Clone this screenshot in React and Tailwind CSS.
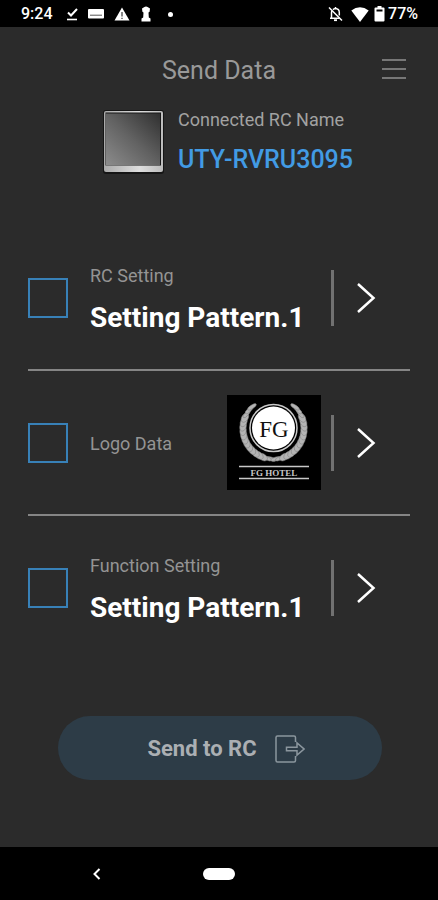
import React from "react";

function StatusBar() {
  return (
    <div className="flex h-[27px] items-center justify-between bg-black pt-px pr-5 pl-[21px] text-white">
      <div className="flex items-center">
        <span className="w-[45px] text-base leading-5 font-medium">9:24</span>
        <svg className="w-3" viewBox="0 0 12 14" fill="none" stroke="currentColor" strokeWidth="2" aria-hidden="true">
          <path d="M2 5.5 5 8.5 11 2" />
          <path d="M1 12.5H11" strokeWidth="1.6" />
        </svg>
        <svg className="ml-[10px] w-4" viewBox="0 0 16 10" aria-hidden="true">
          <rect width="16" height="9.5" rx="1" fill="currentColor" />
          <path d="M2 6.2H14" stroke="#555" strokeWidth="1" />
        </svg>
        <svg className="ml-[10px] w-4" viewBox="0 0 16 14" aria-hidden="true">
          <path d="M8 0.5 15.5 13.5H0.5Z" fill="currentColor" />
          <path d="M8 5V9.5M8 10.7V12" stroke="#555" strokeWidth="1.4" />
        </svg>
        <svg className="ml-[11px] w-[10px]" viewBox="0 0 10 16" fill="currentColor" aria-hidden="true">
          <path d="M3 1.2Q5-.4 7 1.2L9 2.5 8.6 5.8 7.5 6.5 7.8 11.5 9.5 12.5V15.5H.5V12.5L2.2 11.5 2.5 6.5 1.4 5.8 1 2.5Z" />
        </svg>
        <span className="ml-[17px] h-[5px] w-[5px] rounded-full bg-white" />
      </div>
      <div className="flex items-center">
        <svg className="w-[15px]" viewBox="0 0 15 16" fill="none" stroke="currentColor" strokeWidth="1.5" aria-hidden="true">
          <path d="M1 1.5 14 14.5" />
          <path d="M3.5 12V6.5L3.8 5M2 12.2H11.5M5 3.6C5.6 3 6.3 2.7 7.5 2.6 10 2.8 11.3 4.5 11.3 6.5V9.5M7.5 1V2.6" />
          <path d="M6 14.2H9" strokeWidth="1.8" />
        </svg>
        <svg className="ml-2 w-[18px]" viewBox="0 0 18 15" fill="currentColor" aria-hidden="true">
          <path d="M9 15 .3 3.6Q9-3 17.7 3.6Z" />
        </svg>
        <svg className="ml-[5px] w-[11px]" viewBox="0 0 11 16" aria-hidden="true">
          <path d="M3.5 0H7.5V1.5H9.5Q10.5 1.5 10.5 2.5V14.5Q10.5 15.5 9.5 15.5H1.5Q.5 15.5 .5 14.5V2.5Q.5 1.5 1.5 1.5H3.5Z" fill="currentColor" />
          <path d="M2.5 4.5H8.5" stroke="#000" strokeWidth="2" />
        </svg>
        <span className="ml-[3px] text-base leading-5 font-medium">77%</span>
      </div>
    </div>
  );
}

function Header() {
  return (
    <header className="grid h-[81px] grid-cols-[1fr_auto_1fr] items-center px-8 pt-[3px]">
      <h1 className="col-start-2 pt-1 text-[25px] leading-8 font-normal text-[#999]">Send Data</h1>
      <button type="button" aria-label="Menu" className="flex w-6 flex-col gap-[7px] justify-self-end">
        <span className="h-[2px] bg-[#777]" />
        <span className="h-[2px] bg-[#777]" />
        <span className="h-[2px] bg-[#777]" />
      </button>
    </header>
  );
}

function Device() {
  return (
    <svg className="h-16 w-[61px]" viewBox="0 0 61 64" aria-hidden="true">
      <defs>
        <linearGradient id="screen" x1="0" y1="1" x2="1" y2="0">
          <stop offset="0" stopColor="#8c8c8c" />
          <stop offset="0.5" stopColor="#626262" />
          <stop offset="1" stopColor="#303030" />
        </linearGradient>
        <linearGradient id="base" x1="0" y1="0" x2="1" y2="0">
          <stop offset="0" stopColor="#aaa" />
          <stop offset="0.6" stopColor="#dedede" />
          <stop offset="1" stopColor="#bbb" />
        </linearGradient>
      </defs>
      <rect width="61" height="64" rx="3" fill="#151515" />
      <rect x="1" y="1" width="59" height="61" rx="2" fill="url(#base)" />
      <rect x="2.5" y="2.5" width="55.5" height="53" fill="#171717" />
      <rect x="3" y="3.5" width="54" height="52" fill="url(#screen)" />
    </svg>
  );
}

function laurelLeaves(side) {
  const leaves = [];
  for (let i = 0; i < 17; i += 1) {
    const deg = 94 + i * 8.2;
    const a = (deg * Math.PI) / 180;
    const x = 46.5 + side * 30.5 * Math.cos(a);
    const y = 33.5 + 30.5 * Math.sin(a);
    const tilt = side === 1 ? deg + 90 : 90 - deg;
    leaves.push(
      <ellipse
        key={deg}
        cx={x}
        cy={y}
        rx="5"
        ry={i > 13 || i < 2 ? 1.8 : 3.2}
        transform={`rotate(${tilt + side * 12} ${x} ${y})`}
      />
    );
  }
  return leaves;
}

function HotelLogo() {
  return (
    <svg className="h-[95px] w-[94px] shrink-0" viewBox="0 0 94 95" role="img" aria-label="FG Hotel logo">
      <rect width="94" height="95" fill="#000" />
      <g fill="#b4b4b4" stroke="#7c7c7c" strokeWidth="0.5">
        {laurelLeaves(1)}
        {laurelLeaves(-1)}
      </g>
      <circle cx="46.5" cy="33" r="25.5" fill="#000" />
      <circle cx="46.5" cy="33" r="23.5" fill="none" stroke="#c9c9c9" strokeWidth="1.5" />
      <circle cx="46.5" cy="33" r="21.5" fill="#fff" />
      <text x="47" y="42" textAnchor="middle" fontSize="23" fill="#111" className="font-['Liberation_Serif',serif]">FG</text>
      <path d="M12 71.5H82M12 83.5H82" stroke="#c8c8c8" strokeWidth="1.6" />
      <text x="47" y="81" textAnchor="middle" fontSize="9" fontWeight="700" fill="#c8c8c8" className="font-['Liberation_Serif',serif]">FG HOTEL</text>
    </svg>
  );
}

function SettingRow({ id, label, value, children }) {
  return (
    <li className="flex h-[145px] items-center border-b-2 border-[#858585] last:h-[143px] last:border-b-0">
      <input
        id={id}
        type="checkbox"
        className="h-10 w-10 shrink-0 appearance-none border-2 border-[#3881b8] checked:bg-[#3881b8]"
      />
      <label htmlFor={id} className="ml-[22px] flex flex-1 flex-col gap-[14px] pt-[2px] whitespace-nowrap">
        <span className="text-lg leading-6 text-[#949494]">{label}</span>
        {value && <span className="text-[28px] leading-8 font-bold text-white">{value}</span>}
      </label>
      {children}
      <button
        type="button"
        aria-label={`Open ${label}`}
        className="ml-[10px] flex h-14 w-[79px] shrink-0 items-center border-l-[3px] border-[#717171] pl-[22px] text-white"
      >
        <svg className="h-8 w-5" viewBox="0 0 20 32" fill="none" stroke="currentColor" strokeWidth="2.5" aria-hidden="true">
          <path d="M2 2 17.5 16 2 30" />
        </svg>
      </button>
    </li>
  );
}

function SendButton() {
  return (
    <button
      type="button"
      className="mt-[57px] mr-7 ml-[30px] flex h-16 items-center justify-center gap-[18px] rounded-full bg-[#2d3c47] pt-px pl-3 text-[#abafb3]"
    >
      <span className="text-[22px] leading-7 font-bold">Send to RC</span>
      <svg className="h-7 w-[30px]" viewBox="0 0 30 28" fill="none" stroke="#8b969e" strokeWidth="1.5" aria-hidden="true">
        <path d="M20.5 7V2.5Q20.5 1 19 1H2.5Q1 1 1 2.5V25.5Q1 27 2.5 27H19Q20.5 27 20.5 25.5V21" />
        <path d="M11.5 12.2H22V8L29 14 22 20V15.8H11.5Z" />
      </svg>
    </button>
  );
}

function NavigationBar() {
  return (
    <nav className="grid h-[53px] grid-cols-[1fr_auto_1fr] items-center bg-black text-white">
      <div className="flex justify-center pr-[10px]">
        <button type="button" aria-label="Back">
          <svg className="h-3 w-2" viewBox="0 0 8 12" fill="none" stroke="currentColor" strokeWidth="2" aria-hidden="true">
            <path d="M6.5 1 1.5 6 6.5 11" />
          </svg>
        </button>
      </div>
      <button type="button" aria-label="Home" className="h-3 w-8 rounded-full bg-white" />
    </nav>
  );
}

export default function App() {
  return (
    <div className="flex min-h-screen flex-col bg-[#2b2b2b] font-[Roboto,sans-serif]">
      <StatusBar />
      <Header />
      <main className="flex flex-1 flex-col px-7">
        <section className="flex items-center justify-center gap-[14px] pl-[18px]">
          <Device />
          <div className="flex flex-col gap-[14px] pb-[2px] whitespace-nowrap">
            <p className="text-lg leading-6 text-[#a2a2a2]">Connected RC Name</p>
            <p className="text-[25px] leading-7 font-medium text-[#429be4]">UTY-RVRU3095</p>
          </div>
        </section>
        <ul className="mt-[50px]">
          <SettingRow id="rc-setting" label="RC Setting" value="Setting Pattern.1" />
          <SettingRow id="logo-data" label="Logo Data">
            <HotelLogo />
          </SettingRow>
          <SettingRow id="function-setting" label="Function Setting" value="Setting Pattern.1" />
        </ul>
        <SendButton />
      </main>
      <NavigationBar />
    </div>
  );
}
